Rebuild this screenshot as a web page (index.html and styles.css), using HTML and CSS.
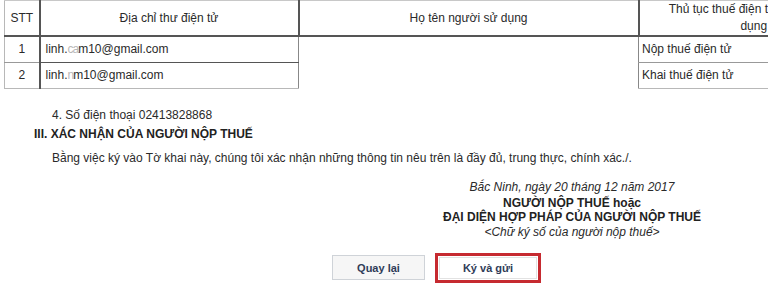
FILE: index.html
```html
<!DOCTYPE html>
<html lang="vi">

<head>
  <meta charset="utf8">
  <title>Tờ khai</title>
  <link rel="stylesheet" href="styles.css">
</head>

<body>

  <div class="tokhai">
    <table class="ds-email">
      <tr>
        <th class="stt">STT</th>
        <th class="email">Địa chỉ thư điện tử</th>
        <th class="hoten">Họ tên người sử dụng</th>
        <th class="thutuc">Thủ tục thuế điện tử đăng ký sử dụng</th>
      </tr>
      <tr>
        <td class="stt">1</td>
        <td class="email">linh.<span class="mo">ca</span>m10@gmail.com</td>
        <td class="hoten"></td>
        <td class="thutuc">Nộp thuế điện tử</td>
      </tr>
      <tr class="last">
        <td class="stt">2</td>
        <td class="email">linh.<span class="mo">n</span>m10@gmail.com</td>
        <td class="hoten"></td>
        <td class="thutuc">Khai thuế điện tử</td>
      </tr>
    </table>

    <p class="sdt">4. Số điện thoại 02413828868</p>
    <h3 class="muc">III. XÁC NHẬN CỦA NGƯỜI NỘP THUẾ</h3>
    <p class="camket">Bằng việc ký vào Tờ khai này, chúng tôi xác nhận những thông tin nêu trên là đầy đủ, trung thực, chính xác./.</p>

    <div class="chuky">
      <div class="ngay">Bắc Ninh, ngày 20 tháng 12 năm 2017</div>
      <div class="nguoi">NGƯỜI NỘP THUẾ hoặc</div>
      <div class="nguoi">ĐẠI DIỆN HỢP PHÁP CỦA NGƯỜI NỘP THUẾ</div>
      <div class="ghichu">&lt;Chữ ký số của người nộp thuế&gt;</div>
    </div>

    <div class="buttons">
      <button class="bt">Quay lại</button>
      <div class="highlight">
        <button class="bt send">Ký và gửi</button>
      </div>
    </div>
  </div>

</body>

</html>
```

FILE: styles.css
```css
* {
  box-sizing: border-box;
}

body {
  margin: 0;
  background-color: white;
  overflow: hidden;
  font-family: "Liberation Sans", Arial, sans-serif;
  font-size: 12px;
  color: #2a2a2a;
}

div.tokhai {
  width: 768px;
  height: 288px;
  overflow: hidden;
}

table.ds-email {
  border-collapse: collapse;
  margin-left: 4px;
  width: 864px;
  table-layout: fixed;
}

table.ds-email th,
table.ds-email td {
  border: 1px solid #999;
  padding: 0 4px;
  font-weight: normal;
}

table.ds-email th {
  height: 35px;
  border-top-color: #c8c8c8;
  border-bottom: 2px solid #555;
  text-align: center;
}

table.ds-email td {
  height: 26px;
}

table.ds-email .stt {
  width: 35px;
  text-align: center;
  border-left-color: #b8b8b8;
  border-right: 2px solid #555;
}

table.ds-email .email {
  width: 259px;
}

table.ds-email th.email {
  border-right: 2px solid #555;
}

table.ds-email td.email {
  padding-left: 5px;
  border-bottom-color: #555;
  border-right-color: #888;
}

table.ds-email .hoten {
  width: 340px;
}

table.ds-email td.hoten {
  border: none;
}

table.ds-email .thutuc {
  width: 230px;
}

table.ds-email th.thutuc {
  border-left: 2px solid #555;
  line-height: 17px;
  padding: 0 25px;
}

table.ds-email td.thutuc {
  border-left-color: #888;
  padding-left: 3px;
}

table.ds-email tr.last td.stt,
table.ds-email tr.last td.email,
table.ds-email tr.last td.thutuc {
  border-bottom-color: #b8b8b8;
}

table.ds-email span.mo {
  color: #b8b8b8;
  letter-spacing: -1px;
}

p.sdt {
  margin: 19px 0 0 52px;
  line-height: 14px;
}

h3.muc {
  margin: 5px 0 0 34px;
  font-size: 12px;
  line-height: 14px;
  color: #222;
}

p.camket {
  margin: 10px 0 0 52px;
  line-height: 14px;
}

div.chuky {
  margin: 15px 0 0 372px;
  width: 400px;
  text-align: center;
  line-height: 14px;
}

div.chuky div.ngay,
div.chuky div.ghichu {
  font-style: italic;
}

div.chuky div.ngay {
  margin-bottom: 2px;
}

div.chuky div.nguoi {
  font-weight: bold;
  color: #222;
}

div.chuky div.ghichu {
  margin-top: 1px;
}

div.buttons {
  display: flex;
  align-items: center;
  column-gap: 10px;
  margin: 14px 0 0 332px;
}

button.bt {
  font-family: "Liberation Sans", Arial, sans-serif;
  font-size: 11px;
  font-weight: bold;
  color: #2f3c58;
  background-color: #f6f6f6;
  border: 1px solid #cfd3d8;
  height: 25px;
  width: 93px;
  padding: 0;
}

div.highlight {
  border: 3px solid #c62a30;
  padding: 1px;
}

button.send {
  background-color: white;
  border-color: #e2e2e2;
  width: 98px;
  height: 22px;
}
```
